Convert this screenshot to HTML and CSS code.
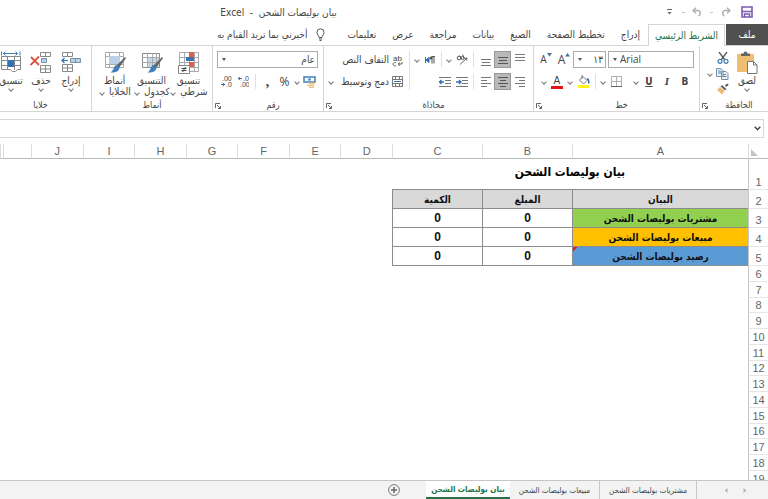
FILE: index.html
```html
<!DOCTYPE html>
<html lang="ar" dir="rtl">
<head>
    <meta charset="UTF-8">
    <meta name="viewport" content="width=device-width, initial-scale=1.0">
    <title>بيان بوليصات الشحن - Excel</title>
    <link rel="stylesheet" href="styles.css">
</head>
<body>
    <header class="titlebar">
        <div class="quick">
            <button class="ib" aria-label="حفظ">
                <svg width="12" height="12" viewBox="0 0 12 12"><path d="M1 1h10v10H1z" fill="#fff" stroke="#7b5bb0" stroke-width="1.6"/><path d="M1 5.5h10M3.500 11V8h5v3" fill="none" stroke="#7b5bb0" stroke-width="1.5"/></svg>
            </button>
            <button class="ib redo" aria-label="إعادة">
                <svg width="11" height="10" viewBox="0 0 11 10"><path d="M10 3.500H4.500a3 3 0 0 0 0 5.500M7 .7l3 2.800-3 2.800" fill="none" stroke="#b0b0b0" stroke-width="1.500"/></svg>
            </button>
            <span class="tick"></span>
            <button class="ib" aria-label="تراجع">
                <svg width="11" height="10" viewBox="0 0 11 10"><path d="M1 3.500h5.500a3 3 0 0 1 0 5.500M4 .7l-3 2.800 3 2.800" fill="none" stroke="#b0b0b0" stroke-width="1.500"/></svg>
            </button>
            <span class="tick"></span>
            <button class="ib more" aria-label="تخصيص">
                <svg width="5" height="6" viewBox="0 0 5 6"><path d="M0 .5h5" stroke="#666"/><path d="M.5 3h4L2.500 5.500z" fill="#666"/></svg>
            </button>
        </div>
        <h1>بيان بوليصات الشحن&nbsp; -&nbsp; Excel</h1>
    </header>

    <nav class="tabs">
        <button class="file">ملف</button>
        <button class="active">الشريط الرئيسي</button>
        <button>إدراج</button>
        <button>تخطيط الصفحة</button>
        <button>الصيغ</button>
        <button>بيانات</button>
        <button>مراجعة</button>
        <button>عرض</button>
        <button>تعليمات</button>
        <button class="tell">
            <svg width="9" height="13" viewBox="0 0 9 13"><path d="M3 9.500C3 7.500 1 6.800 1 4.300a3.500 3.500 0 0 1 7 0c0 2.500-2 3.200-2 5.200zM3 11h3M3.500 12.500h2" fill="none" stroke="#555"/></svg>
            أخبرني بما تريد القيام به
        </button>
    </nav>

    <div class="ribbon">
        <section class="group clipboard">
            <div class="tools">
                <button class="big">
                    <svg width="22" height="23" viewBox="0 0 22 23"><path d="M1 3h17v18H1z" fill="#eebf72"/><path d="M5 5V2.500h2.500a2 2 0 0 1 4 0H14V5z" fill="#666"/><path d="M11.500 10.500h6l3.500 3.500v8.500h-9.500z" fill="#fff" stroke="#777"/><path d="M17.500 10.500V14H21" fill="none" stroke="#777"/></svg>
                    <span>لصق</span>
                    <i class="chev"></i>
                </button>
                <div class="stack">
                    <button class="ib" aria-label="قص">
                        <svg width="12" height="12" viewBox="0 0 12 12"><path d="M2 0l6 8M10 0L4 8" stroke="#555" stroke-width="1.300"/><circle cx="3" cy="9.300" r="2" fill="none" stroke="#3f7fb5" stroke-width="1.200"/><circle cx="9" cy="9.300" r="2" fill="none" stroke="#3f7fb5" stroke-width="1.200"/></svg>
                    </button>
                    <div class="row">
                        <button class="ib" aria-label="نسخ">
                            <svg width="13" height="12" viewBox="0 0 13 12"><path d="M.5.5H5L7 2.500v6H.5zM5.500 3.500H10l2 2v6H5.500z" fill="#e9f0f6" stroke="#7890a5"/><path d="M2 3h3M2 5h3M7 6.500h3M7 8.500h3.500" stroke="#4f8abb"/></svg>
                        </button>
                        <i class="chev"></i>
                    </div>
                    <button class="ib" aria-label="نسخ التنسيق">
                        <svg width="13" height="12" viewBox="0 0 13 12"><path d="M9 2l3-1.500L12.500 2 10 4z" fill="#555"/><path d="M6 2l4.500 4L9 7.500 4.500 3.500z" fill="#666"/><path d="M4 4l4.500 4L6 11.500 1 7z" fill="#edbb76"/></svg>
                    </button>
                </div>
            </div>
            <footer><span>الحافظة</span><button class="launch" aria-label="خيارات الحافظة"><svg width="6" height="6" viewBox="0 0 6 6"><path d="M.5 5V.5H5M2 2l3.500 3.500M5.500 3v2.500H3" fill="none" stroke="#666"/></svg></button></footer>
        </section>

        <section class="group font">
            <div class="tools rows">
                <div class="row">
                    <span class="combo name"><select aria-label="الخط" dir="ltr"><option>Arial</option></select></span>
                    <span class="combo size"><select aria-label="حجم الخط"><option>١٣</option></select></span>
                    <button class="ib grow" aria-label="تكبير الخط">A<svg width="5" height="4" viewBox="0 0 5 4"><path d="M0 3.500L2.500 0 5 3.500z" fill="#48729b"/></svg></button>
                    <button class="ib shrink" aria-label="تصغير الخط">A<svg width="5" height="4" viewBox="0 0 5 4"><path d="M0 0h5L2.500 3.500z" fill="#48729b"/></svg></button>
                </div>
                <div class="row">
                    <button class="ib"><b>B</b></button>
                    <button class="ib italic">I</button>
                    <button class="ib under"><b>U</b></button>
                    <i class="chev"></i>
                    <span class="gap"></span>
                    <button class="ib" aria-label="حدود">
                        <svg width="11" height="11" viewBox="0 0 11 11"><path d="M.5.5h10v10H.5zM5.500 0v11M0 5.500h11" fill="none" stroke="#b0b0b0"/><path d="M0 10.500h11" stroke="#666"/></svg>
                    </button>
                    <i class="chev"></i>
                    <span class="sep"></span>
                    <button class="ib" aria-label="لون التعبئة">
                        <svg width="13" height="13" viewBox="0 0 13 13"><path d="M1 10h11v3H1z" fill="#fdf21b"/><path d="M2.500 5L6 1.500l4 4L6.500 9z" fill="#fff" stroke="#777"/><path d="M5 4V0" stroke="#777"/><path d="M10 3.500c2 1 2 3 1.500 5" fill="none" stroke="#2f6fa8" stroke-width="1.500"/></svg>
                    </button>
                    <i class="chev"></i>
                    <button class="ib color" aria-label="لون الخط">A</button>
                    <i class="chev"></i>
                </div>
            </div>
            <footer><span>خط</span><button class="launch" aria-label="خيارات الخط"><svg width="6" height="6" viewBox="0 0 6 6"><path d="M.5 5V.5H5M2 2l3.500 3.500M5.500 3v2.500H3" fill="none" stroke="#666"/></svg></button></footer>
        </section>

        <section class="group align">
            <div class="tools">
                <div class="rows">
                    <div class="row">
                        <button class="ib" aria-label="محاذاة للأعلى"><svg width="10" height="12" viewBox="0 0 10 12"><path d="M0 .5h10M0 3.500h10M0 6.500h10" stroke="#777"/></svg></button>
                        <button class="ib on" aria-label="محاذاة للوسط"><svg width="10" height="12" viewBox="0 0 10 12"><path d="M0 3.500h10M1 6.500h8M0 9.500h10" stroke="#555"/></svg></button>
                        <button class="ib" aria-label="محاذاة للأسفل"><svg width="10" height="12" viewBox="0 0 10 12"><path d="M0 5.500h10M1 8.500h8M0 11.500h10" stroke="#777"/></svg></button>
                        <span class="sep"></span>
                        <button class="ib" aria-label="الاتجاه"><svg width="12" height="11" viewBox="0 0 12 11"><path d="M4 10.500L11 4M11 4l-2.500.5M11 4l-.5 2.500" fill="none" stroke="#666"/><circle cx="3" cy="4" r="1.800" fill="none" stroke="#555"/><path d="M3.500 1.500L6 5M6.500.5l2 4" stroke="#555"/><circle cx="6.500" cy="4" r="1.500" fill="none" stroke="#555"/></svg></button>
                        <i class="chev"></i>
                        <span class="sep"></span>
                        <button class="ib" aria-label="اتجاه النص"><svg width="10" height="8" viewBox="0 0 10 8"><path d="M.5 1v6M1 4l3-2.500v5z" stroke="#2f6fb5" fill="#2f6fb5"/><path d="M10 .5H6.500M7 1v6.500M9 1v6.500" stroke="#555"/><circle cx="6" cy="2" r="1.500" fill="#555"/></svg></button>
                        <i class="chev"></i>
                    </div>
                    <div class="row">
                        <button class="ib" aria-label="محاذاة لليمين"><svg width="10" height="10" viewBox="0 0 10 10"><path d="M0 .5h10M4 3.500h6M0 6.500h10M4 9.500h6" stroke="#777"/></svg></button>
                        <button class="ib on" aria-label="توسيط"><svg width="10" height="10" viewBox="0 0 10 10"><path d="M0 .5h10M2 3.500h6M0 6.500h10M2 9.500h6" stroke="#555"/></svg></button>
                        <button class="ib" aria-label="محاذاة لليسار"><svg width="10" height="10" viewBox="0 0 10 10"><path d="M0 .5h10M0 3.500h6M0 6.500h10M0 9.500h6" stroke="#777"/></svg></button>
                        <span class="sep"></span>
                        <button class="ib" aria-label="إنقاص المسافة البادئة"><svg width="12" height="10" viewBox="0 0 12 10"><path d="M0 .5h12M6 3.500h6M6 6.500h6M0 9.500h12" stroke="#777"/><path d="M0 5h5M3 3l2 2-2 2" fill="none" stroke="#2f6fb5" stroke-width="1.300"/></svg></button>
                        <button class="ib" aria-label="زيادة المسافة البادئة"><svg width="12" height="10" viewBox="0 0 12 10"><path d="M0 .5h12M6 3.500h6M6 6.500h6M0 9.500h12" stroke="#777"/><path d="M0 5h5M2.500 3l-2 2 2 2" fill="none" stroke="#2f6fb5" stroke-width="1.300"/></svg></button>
                    </div>
                </div>
                <span class="sep tall"></span>
                <div class="rows">
                    <button class="label">
                        <span class="wrap"><svg width="11" height="14" viewBox="0 0 11 14"><text class="ab" x="1" y="8">ab</text><path d="M4 9.500c-2 0-3 .8-3 1.800s1 1.700 3 1.700M6 11h4V9M8 9.500L6 11l2 1.800" fill="none" stroke="#666"/></svg></span>
                        التفاف النص
                    </button>
                    <button class="label">
                        <span class="wrap"><svg width="11" height="11" viewBox="0 0 11 11"><path d="M.5.5h10v10H.5zM0 3.500h11M0 7.500h11M3.500 0v3.500M7.500 0v3.500M3.500 7.500V11M7.500 7.500V11" fill="none" stroke="#777"/><path d="M2 5.500h7" stroke="#2f6fb5"/></svg></span>
                        دمج وتوسيط
                        <i class="chev"></i>
                    </button>
                </div>
            </div>
            <footer><span>محاذاة</span><button class="launch" aria-label="خيارات المحاذاة"><svg width="6" height="6" viewBox="0 0 6 6"><path d="M.5 5V.5H5M2 2l3.500 3.500M5.500 3v2.500H3" fill="none" stroke="#666"/></svg></button></footer>
        </section>

        <section class="group number">
            <div class="tools rows">
                <div class="row">
                    <span class="combo format"><select aria-label="تنسيق الأرقام"><option>عام</option></select></span>
                </div>
                <div class="row">
                    <button class="ib" aria-label="تنسيق محاسبي"><svg width="13" height="12" viewBox="0 0 13 12"><path d="M1 1h11v5H1z" fill="#fff" stroke="#3f7fbd" stroke-width="1.500"/><circle cx="6.500" cy="3.500" r="1.300" fill="#3f7fbd"/><path d="M6 6.500h6V8H6zM4 8.500h7V10H4zM6 10.500h5V12H6z" fill="#efc27a"/></svg></button>
                    <i class="chev"></i>
                    <button class="ib percent">%</button>
                    <button class="ib comma">,</button>
                    <span class="sep"></span>
                    <button class="ib" aria-label="إنقاص المنازل"><svg width="11" height="11" viewBox="0 0 11 11"><path d="M0 2.500h4M2 .8L.4 2.500 2 4.200" fill="none" stroke="#2f6fb5"/><text x="5" y="5">.0</text><text x="2" y="11">.00</text></svg></button>
                    <button class="ib" aria-label="زيادة المنازل"><svg width="11" height="11" viewBox="0 0 11 11"><path d="M0 8.500h4M2 6.800l1.600 1.700L2 10.200" fill="none" stroke="#2f6fb5"/><text x="1" y="5">.00</text><text x="5" y="11">.0</text></svg></button>
                </div>
            </div>
            <footer><span>رقم</span><button class="launch" aria-label="خيارات الأرقام"><svg width="6" height="6" viewBox="0 0 6 6"><path d="M.5 5V.5H5M2 2l3.500 3.500M5.500 3v2.500H3" fill="none" stroke="#666"/></svg></button></footer>
        </section>

        <section class="group styles">
            <div class="tools">
                <button class="big">
                    <svg width="22" height="23" viewBox="0 0 22 23"><path d="M1.500 1.500h19v19h-19zM1 6.500h20M1 11.500h20M1 16.500h20M6.500 1v20M11.500 1v20M16.500 1v20" fill="#fff" stroke="#aaa"/><path d="M11 1h5v5h-5zM11 11h5v5h-5z" fill="#e2604a"/><path d="M8 6h8v4H8z" fill="#3d74b0"/><path d="M.5 14.500h11v8H.5z" fill="#fff" stroke="#888"/><path d="M3.500 17.500h5M3.500 19.500h5M7.500 16l-3 5" stroke="#444"/></svg>
                    <span>تنسيق</span>
                    <span>شرطي <i class="chev"></i></span>
                </button>
                <button class="big">
                    <svg width="22" height="23" viewBox="0 0 22 23"><path d="M1.500 2.500h17v14h-17z" fill="#fff" stroke="#888"/><path d="M6 6h12v10H6z" fill="#c3d7ea"/><path d="M1 6.500h18M1 11.500h18M6.500 2v15M11.500 2v15M15.500 2v15" stroke="#aaa"/><path d="M21 6l1 1-7 10-3-2z" fill="#666"/><path d="M12 14l3.500 3c-1 4-5 5-9 4.500 3-1.500 3-6 5.500-7.500z" fill="#3f7fbd"/></svg>
                    <span>التنسيق</span>
                    <span>كجدول <i class="chev"></i></span>
                </button>
                <button class="big">
                    <svg width="22" height="23" viewBox="0 0 22 23"><path d="M1.500 1.500h18v15h-18zM1 5.500h19M1 13.500h19M5.500 1v16M15.500 1v16" fill="#fff" stroke="#aaa"/><path d="M5 5h11v8H5z" fill="#b9d0e6"/><path d="M21 6l1 1-7 10-3-2z" fill="#666"/><path d="M12 14l3.500 3c-1 4-5 5-9 4.500 3-1.500 3-6 5.500-7.500z" fill="#3f7fbd"/></svg>
                    <span>أنماط</span>
                    <span>الخلايا <i class="chev"></i></span>
                </button>
            </div>
            <footer><span>أنماط</span></footer>
        </section>

        <section class="group cells">
            <div class="tools">
                <button class="big">
                    <svg width="20" height="23" viewBox="0 0 20 23"><path d="M1.500 1.500h10v4h-10zM6.500 1v5M1.500 13.500h10v7h-10zM6.500 13v8M1 17h11" fill="#fff" stroke="#888"/><path d="M9.500 7.500h10v4h-10zM14.500 7v5" fill="#b9d0e6" stroke="#7890a5"/><path d="M1 9.500h6M3.500 7L1 9.500 3.500 12" fill="none" stroke="#2f6fb5" stroke-width="1.200"/></svg>
                    <span>إدراج</span>
                    <i class="chev"></i>
                </button>
                <button class="big">
                    <svg width="22" height="23" viewBox="0 0 22 23"><path d="M10.500 1.500h10v4h-10zM15.500 1v5M10.500 14.500h10v7h-10zM15.500 14v8M10 18h11" fill="#fff" stroke="#888"/><path d="M11.500 7.500h5v4h-5z" fill="#b9d0e6" stroke="#7890a5"/><path d="M1 6l8 8M9 5.500L.5 14" stroke="#d9533d" stroke-width="1.800"/></svg>
                    <span>حذف</span>
                    <i class="chev"></i>
                </button>
                <button class="big">
                    <svg width="22" height="23" viewBox="0 0 22 23"><path d="M1.500 5.500h19v13h-3l-2 2h-3l-2-2h-9zM1 9.500h20M1 14.500h20M7.500 5v14M14.500 5v14" fill="#fff" stroke="#888"/><path d="M8 9h6v7H8z" fill="#2f72b5"/><path d="M3 2.500h15M5.500.5l-2 2 2 2M15.500.5l2 2-2 2M1.500.5v4M20 .5v4" fill="none" stroke="#3f7fbd"/></svg>
                    <span>تنسيق</span>
                    <i class="chev"></i>
                </button>
            </div>
            <footer><span>خلايا</span></footer>
        </section>
    </div>

    <div class="formula">
        <input type="text" aria-label="شريط الصيغة">
        <button aria-label="توسيع"><svg width="7" height="5" viewBox="0 0 7 5"><path d="M.7.7l2.800 3 2.800-3" fill="none" stroke="#444" stroke-width="1.400"/></svg></button>
    </div>

    <main class="sheet">
        <table>
            <colgroup>
                <col class="c-num"><col class="c-a"><col class="c-b"><col class="c-b">
                <col><col><col><col><col><col><col>
                <col class="c-k"><col class="c-l">
            </colgroup>
            <thead>
                <tr>
                    <th class="corner"><svg width="7" height="7" viewBox="0 0 7 7"><path d="M0 0v7h7z" fill="#c4c4c4"/></svg></th>
                    <th>A</th><th>B</th><th>C</th><th>D</th><th>E</th><th>F</th><th>G</th><th>H</th><th>I</th><th>J</th><th></th><th></th>
                </tr>
            </thead>
            <tbody>
                <tr class="title"><th>1</th><td colspan="3">بيان بوليصات الشحن</td><td colspan="9"></td></tr>
                <tr class="data head"><th>2</th><td>البيان</td><td>المبلغ</td><td>الكمية</td><td colspan="9"></td></tr>
                <tr class="data"><th>3</th><td class="green">مشتريات بوليصات الشحن</td><td class="n">0</td><td class="n">0</td><td colspan="9"></td></tr>
                <tr class="data"><th>4</th><td class="orange">مبيعات بوليصات الشحن</td><td class="n">0</td><td class="n">0</td><td colspan="9"></td></tr>
                <tr class="data"><th>5</th><td class="blue">رصيد بوليصات الشحن</td><td class="n">0</td><td class="n">0</td><td colspan="9"></td></tr>
                <tr><th>6</th><td colspan="12"></td></tr>
                <tr><th>7</th><td colspan="12"></td></tr>
                <tr><th>8</th><td colspan="12"></td></tr>
                <tr><th>9</th><td colspan="12"></td></tr>
                <tr><th>10</th><td colspan="12"></td></tr>
                <tr><th>11</th><td colspan="12"></td></tr>
                <tr><th>12</th><td colspan="12"></td></tr>
                <tr><th>13</th><td colspan="12"></td></tr>
                <tr><th>14</th><td colspan="12"></td></tr>
                <tr><th>15</th><td colspan="12"></td></tr>
                <tr><th>16</th><td colspan="12"></td></tr>
                <tr><th>17</th><td colspan="12"></td></tr>
                <tr><th>18</th><td colspan="12"></td></tr>
                <tr><th>19</th><td colspan="12"></td></tr>
            </tbody>
        </table>
    </main>

    <nav class="sheets">
        <div class="arrows">
            <button aria-label="السابق"><svg width="4" height="5" viewBox="0 0 4 5"><path d="M.5 0L3.500 2.500.5 5z" fill="#b5b5b5"/></svg></button>
            <button aria-label="التالي"><svg width="4" height="5" viewBox="0 0 4 5"><path d="M3.500 0L.5 2.500 3.500 5z" fill="#b5b5b5"/></svg></button>
        </div>
        <button class="tab">مشتريات بوليصات الشحن</button>
        <button class="tab">مبيعات بوليصات الشحن</button>
        <button class="tab current">بيان بوليصات الشحن</button>
        <button class="add" aria-label="ورقة جديدة"><svg width="12" height="12" viewBox="0 0 12 12"><circle cx="6" cy="6" r="5.400" fill="none" stroke="#777"/><path d="M6 3v6M3 6h6" stroke="#666" stroke-width="1.500"/></svg></button>
    </nav>
</body>
</html>
```
FILE: styles.css
```css
* {
  box-sizing: border-box;
}

body {
  margin: 0;
  height: 100vh;
  display: flex;
  flex-direction: column;
  overflow: hidden;
  background: #fff;
  color: #444;
  font-family: "DejaVu Sans Condensed", "DejaVu Sans", sans-serif;
  font-size: 10px;
  line-height: 11px;
}

button, select, input {
  font: inherit;
  color: inherit;
  background: none;
  border: 0;
  padding: 0;
  margin: 0;
}

button {
  display: flex;
  align-items: center;
  justify-content: center;
  white-space: nowrap;
}

svg {
  flex: none;
  display: block;
}

svg text {
  font-family: "Liberation Sans", sans-serif;
  font-size: 7px;
  fill: #444;
  direction: ltr;
}

svg .ab {
  font-size: 8px;
}

/* title bar */
.titlebar {
  display: flex;
  align-items: center;
  height: 24px;
  flex: none;
}

.quick {
  display: flex;
  align-items: center;
  padding-right: 13px;
}

.quick .redo {
  margin-right: 4px;
}

.tick {
  width: 3px;
  height: 1px;
  margin: 0 4px;
  background: #c4c4c4;
}

.titlebar h1 {
  flex: 1;
  margin: 0;
  padding-right: 104px;
  font-size: 10px;
  font-weight: normal;
  text-align: center;
}

/* ribbon tabs */
.tabs {
  display: flex;
  height: 22px;
  flex: none;
  border-bottom: 1px solid #d5d5d5;
}

.tabs button {
  padding: 0 8px;
}

.tabs .file {
  width: 42px;
  background: #505050;
  color: #fff;
}

.tabs .active {
  width: 77px;
  padding: 0;
  margin: 0 1px -1px 0;
  background: #fff;
  color: #217346;
  border: 1px solid #d5d5d5;
  border-bottom: 0;
}

.tabs .tell {
  gap: 9px;
  padding-right: 14px;
}

/* ribbon */
.ribbon {
  display: flex;
  height: 66px;
  flex: none;
  overflow: hidden;
  border-bottom: 1px solid #d5d5d5;
}

.group {
  display: flex;
  flex-direction: column;
  flex: none;
  padding: 5px 5px 0 0;
  border-left: 1px solid #d5d5d5;
}

.clipboard { width: 69px; }
.font { width: 166px; }
.align { width: 210px; }
.number { width: 111px; }
.styles { width: 121px; }
.cells { width: 101px; border: 0; }

.tools {
  display: flex;
  height: 49px;
}

.rows {
  display: flex;
  flex-direction: column;
  gap: 5px;
}

.row {
  display: flex;
  align-items: center;
  height: 17px;
}

.group footer {
  display: flex;
  align-items: center;
  margin-right: -5px;
}

.group footer span {
  flex: 1;
  text-align: center;
  font-size: 9px;
}

.launch {
  width: 10px;
  height: 10px;
}

.ib {
  width: 17px;
  height: 17px;
}

.font .ib {
  width: 18px;
}

.ib.on {
  background: #b9b9b9;
  border: 1px solid #999;
}

.chev {
  display: inline-flex;
  align-items: center;
  justify-content: center;
  width: 8px;
  height: 6px;
}

.chev::before {
  content: "";
  width: 3px;
  height: 3px;
  border: solid #777;
  border-width: 0 1px 1px 0;
  transform: rotate(45deg);
}

.sep {
  width: 1px;
  height: 15px;
  margin: 0 3px;
  background: #e0e0e0;
}

.gap {
  width: 7px;
}

.sep.tall {
  height: 39px;
}

.big {
  width: 37px;
  flex-direction: column;
  justify-content: flex-start;
}

.clipboard .big {
  width: 32px;
}

.cells .big {
  width: 30px;
}

.big svg {
  margin-bottom: 1px;
}

.stack {
  display: flex;
  flex-direction: column;
  justify-content: space-between;
  padding-bottom: 4px;
}

.stack .ib {
  height: 14px;
}

.stack .row {
  height: 14px;
}

.combo {
  position: relative;
  display: flex;
  height: 17px;
  border: 1px solid #ababab;
}

.combo::after {
  content: "";
  position: absolute;
  left: 4px;
  top: 6px;
  border: 2px solid transparent;
  border-top: 3px solid #555;
  border-bottom: 0;
}

.combo select {
  appearance: none;
  width: 100%;
  padding: 0 2px;
}

.name { width: 86px; margin-left: 2px; }
.size { width: 33px; }
.format { width: 101px; }

.name select {
  padding-left: 11px;
  font-family: "Open Sans", sans-serif;
}

.grow, .shrink {
  flex-direction: row-reverse;
  align-items: flex-start;
  font: 12px/17px "Open Sans", sans-serif;
}

.grow svg, .shrink svg {
  margin-top: 2px;
}

.shrink {
  font-size: 10px;
}

.italic {
  font-family: "Liberation Serif", serif;
  font-style: italic;
  font-weight: bold;
  font-size: 11px;
}

.under {
  text-decoration: underline;
}

.font .color {
  width: 12px;
  height: 15px;
  margin: 0 3px;
  font-size: 11px;
  border-bottom: 3px solid #e81313;
}

.percent {
  font: 12px/14px "Open Sans", sans-serif;
}

.comma {
  font: bold 14px/10px "Liberation Serif", serif;
}

.label {
  height: 17px;
  justify-content: flex-start;
}

.label .wrap {
  display: flex;
  justify-content: center;
  width: 17px;
}

.label .chev {
  margin-right: 6px;
}

/* formula bar */
.formula {
  display: flex;
  align-items: center;
  flex: none;
  height: 19px;
  margin: 7px 4px 6px 0;
  border: 1px solid #d9d9d9;
  border-left: 0;
}

.formula input {
  order: 1;
  flex: 1;
  min-width: 0;
}

.formula button {
  width: 12px;
  height: 17px;
}

/* grid */
.sheet {
  flex: 1;
  min-height: 0;
  overflow: hidden;
}

table {
  width: 100%;
  table-layout: fixed;
  border-collapse: separate;
  border-spacing: 0;
}

.c-num { width: 20px; }
.c-a { width: 176px; }
.c-b { width: 90px; }
.c-k { width: 28px; }
.c-l { width: 3px; }

th, td {
  padding: 0;
}

th {
  color: #666;
  font: 11px/12px "Liberation Sans", sans-serif;
}

thead th {
  height: 15px;
  border-left: 1px solid #dcdcdc;
  border-bottom: 1px solid #b5bdb5;
}

.corner svg {
  margin: 2px 10px 0 0;
}

tbody tr {
  height: 16px;
}

/* every fourth row loses a pixel at this zoom */
tbody tr:nth-child(4n) {
  height: 15px;
}

tbody th {
  padding-bottom: 1px;
  border-left: 1px solid #c6c6c6;
  border-bottom: 1px solid #e6e6e6;
  vertical-align: bottom;
}

tbody .title {
  height: 31px;
}

.title td {
  padding-bottom: 3px;
  color: #000;
  font-size: 12px;
  font-weight: bold;
  text-align: center;
}

.title td:nth-child(2) {
  border-bottom: 1px solid #8c8c8c;
}

tbody tr.data {
  height: 19px;
}

.data td {
  color: #111;
  font-weight: bold;
  text-align: center;
}

.data .n {
  font: bold 12px/12px "Liberation Sans", sans-serif;
}

.data td:not(:last-child) {
  border-left: 1px solid #8c8c8c;
  border-bottom: 1px solid #8c8c8c;
}

.head td:not(:last-child) {
  background: #d9d9d9;
}

.data .green { background: #92d050; }
.data .orange { background: #ffc000; }
.data .blue {
  background: linear-gradient(135deg, #e02020 3px, #5b9bd5 3px);
}

/* sheet tabs */
.sheets {
  display: flex;
  flex: none;
  height: 19px;
  background: #f3f3f3;
  border-top: 1px solid #c6c6c6;
  font-size: 8px;
}

.arrows {
  display: flex;
  justify-content: center;
  width: 71px;
  padding-left: 6px;
}

.arrows button {
  width: 19px;
}

.tab {
  padding: 0 9px;
  border-right: 1px solid #c6c6c6;
}

.tab.current {
  padding: 0 5px;
  background: #fff;
  color: #217346;
  font-weight: bold;
  border-right: 0;
  border-bottom: 2px solid #217346;
}

.add {
  width: 24px;
  margin-right: 20px;
}
```
